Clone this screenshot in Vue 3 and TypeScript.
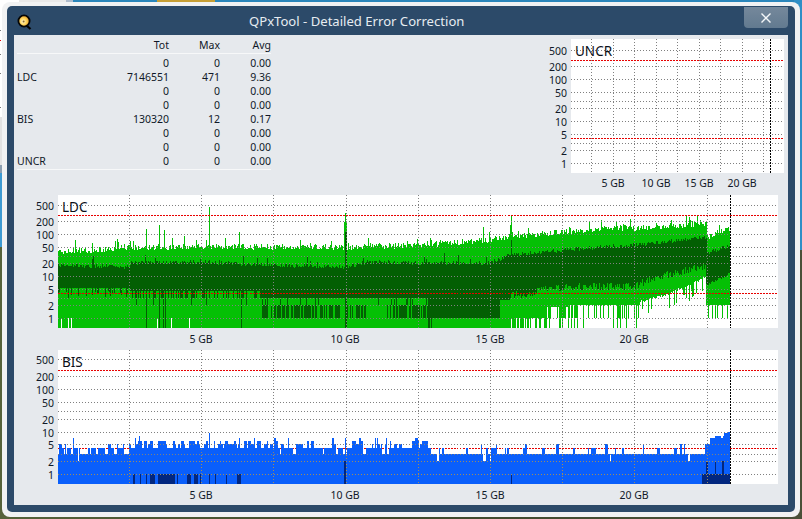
<script setup lang="ts">
type Pt = [number, number]

function mulberry(seed: number) {
  return () => {
    seed |= 0
    seed = (seed + 0x6d2b79f5) | 0
    let t = Math.imul(seed ^ (seed >>> 15), 1 | seed)
    t = (t + Math.imul(t ^ (t >>> 7), 61 | t)) ^ t
    return ((t ^ (t >>> 14)) >>> 0) / 4294967296
  }
}

function lerp(pts: Pt[], x: number): number {
  if (x <= pts[0][0]) return pts[0][1]
  for (let i = 1; i < pts.length; i++) {
    if (x <= pts[i][0]) {
      const [a, b] = pts[i - 1]
      const [c, d] = pts[i]
      return b + ((d - b) * (x - a)) / (c - a)
    }
  }
  return pts[pts.length - 1][1]
}

const seg = (x: number, a: number, b: number) =>
  b > a ? `M${x + 0.5} ${Math.round(a)}V${Math.round(b)}` : ''

/* ---------- LDC ---------- */
function buildLdc() {
  const r = mulberry(4711)
  const T: Pt[] = [[58, 252], [129, 248], [201, 246], [273, 247], [345, 247], [418, 245], [490, 240], [510, 237], [562, 232], [600, 228], [634, 228], [680, 225], [706, 223]]
  const D: Pt[] = [[58, 265], [129, 267], [130, 263], [201, 262], [273, 265], [345, 267], [368, 262], [418, 263], [490, 263], [510, 255], [562, 250], [600, 247], [634, 245], [680, 240], [705, 237]]
  const spikes: Record<number, number> = { 117: 239, 146: 229, 159: 225, 164: 230, 209: 207, 239: 232, 344: 222, 345: 213, 346: 222, 483: 227, 510: 225, 511: 216, 75: 240, 92: 243, 184: 236, 133: 241, 172: 238, 196: 240, 225: 238, 300: 240, 368: 238, 440: 240 }
  const whites = new Set([61, 68, 71, 157, 171, 189])
  const streaks = new Set([146, 159, 163, 165, 241, 345, 346])
  let bright = ''
  let dark = ''
  for (let x = 58; x < 730; x++) {
    const after = x >= 707
    let top = after ? lerp([[707, 237], [730, 228]], x) : lerp(T, x)
    top += r() * 6 - 3
    if (r() < 0.1) top -= r() * 8
    if (spikes[x]) top = spikes[x]
    let dtop = after ? lerp([[707, 253], [730, 245]], x) : lerp(D, x)
    dtop += r() * 4 - 2
    if (x < 510 && r() < 0.07) dtop -= r() * 10
    if (x === 345 || x === 346) dtop = 232
    if (x === 511) dtop = 240

    let dbot: number
    let low = false
    const q = r()
    if (x < 130) dbot = q < 0.3 ? 291 + r() * 7 : 288
    else if (x < 260) dbot = q < 0.05 ? 305 : q < 0.35 ? 298 : 291
    else if (x < 367) { dbot = q < 0.1 ? 305 : 298; low = r() < 0.62 }
    else if (x < 390) { dbot = q < 0.08 ? 305 : 298; low = r() < 0.04 }
    else if (x < 428) { dbot = q < 0.3 ? 305 : 298; low = r() < 0.75 }
    else if (x < 500) dbot = x < 441 && q < 0.35 ? 328 : 318
    else if (x < 510) dbot = 300
    else if (x < 706) dbot = lerp([[510, 292], [562, 283], [634, 282], [660, 272], [705, 262]], x) + r() * 8
    else dbot = lerp([[707, 283], [730, 272]], x) + r() * 3
    if (streaks.has(x)) dbot = 328

    let lbot = 328
    const s = r()
    if (whites.has(x)) lbot = 318
    else if (x >= 510 && x < 543) lbot = s < 0.5 ? 318 : 328
    else if (x >= 543 && x < 570) lbot = s < 0.5 ? 307 : s < 0.75 ? 318 : 328
    else if (x >= 570 && x < 640) lbot = s < 0.08 ? 328 : s < 0.3 ? 318 : 305
    else if (x >= 640 && x < 706) lbot = lerp([[640, 300], [667, 293], [705, 276]], x) + (s < 0.2 ? 8 + r() * 12 : r() * 3)
    else if (x >= 706) lbot = s < 0.2 ? 328 : s < 0.4 ? 318 : 305

    bright += seg(x, top, lbot)
    dark += seg(x, dtop, dbot)
    if (low) dark += seg(x, 305, 318)
  }
  return [
    { d: bright, color: '#05c005' },
    { d: dark, color: '#035f03' },
  ]
}

/* ---------- BIS ---------- */
function buildBis() {
  const r = mulberry(99)
  const y = (v: number) => 474 - 42.5 * Math.log10(v)
  const spikes: Record<number, number> = { 73: 7, 78: 2, 139: 8, 209: 9, 288: 7, 345: 7, 375: 7, 386: 7 }
  const navyRanges: Pt[] = [[133, 134], [140, 140], [146, 146], [150, 153], [154, 154], [158, 174], [177, 177], [187, 190], [194, 197], [200, 200], [209, 209], [215, 215], [226, 226], [237, 240], [511, 511], [702, 729]]
  let blue = ''
  let navy = ''
  for (let x = 58; x < 730; ) {
    const w = r() < 0.4 ? 1 : r() < 0.6 ? 2 : 3
    const q = r()
    let v: number
    if (x < 130) v = q < 0.1 ? 5 : q < 0.5 ? 4 : 3
    else if (x < 268) v = q < 0.05 ? 7 : q < 0.4 ? 6 : q < 0.7 ? 5 : 4
    else if (x < 430) v = q < 0.05 ? 7 : q < 0.15 ? 6 : q < 0.36 ? 5 : q < 0.44 ? 3 : 4
    else if (x < 705) v = q < 0.04 ? 5 : q < 0.2 ? 4 : q < 0.25 ? 2 : 3
    else v = Math.round(lerp([[705, 5], [712, 7], [722, 8], [730, 11]], x) + r() * 1.6 - 0.8)
    for (let i = 0; i < w && x < 730; i++, x++) {
      blue += seg(x, y(spikes[x] ?? v), 484)
    }
  }
  for (const [a, b] of navyRanges) {
    for (let x = a; x <= b; x++) navy += seg(x, 474, 484)
  }
  for (const x of [344, 345]) navy += seg(x, 461, 484)
  for (const x of [706, 707, 715, 722, 723]) navy += seg(x, 461, 474)
  return [
    { d: blue, color: '#0a5ffb' },
    { d: navy, color: '#02277f' },
  ]
}

interface Chart {
  name: string
  svgX: number
  svgY: number
  svgW: number
  svgH: number
  left: number
  right: number
  top: number
  bottom: number
  one: number
  dec: number
  verticals: number[]
  black: number
  xLabels: { t: string; x: number }[]
  xLabelY: number
  titleX: number
  series: { d: string; color: string }[]
  tinted: boolean
}

const ticks = [1, 2, 3, 5, 10, 20, 30, 50, 100, 200, 500]
const yLabels = [1, 2, 5, 10, 20, 50, 100, 200, 500]

const wide = (base: number): number[] => Array.from({ length: 9 }, (_, i) => base + i * 72.2)

const charts: Chart[] = [
  {
    name: 'LDC', svgX: 14, svgY: 190, svgW: 774, svgH: 155,
    left: 58, right: 778, top: 195, bottom: 328, one: 318, dec: 42,
    verticals: wide(129), black: 730,
    xLabels: [{ t: '5 GB', x: 201 }, { t: '10 GB', x: 345 }, { t: '15 GB', x: 490 }, { t: '20 GB', x: 634 }],
    xLabelY: 343, titleX: 62, series: buildLdc(), tinted: false,
  },
  {
    name: 'BIS', svgX: 14, svgY: 345, svgW: 774, svgH: 160,
    left: 58, right: 778, top: 350, bottom: 484, one: 474, dec: 42.5,
    verticals: wide(129), black: 730,
    xLabels: [{ t: '5 GB', x: 201 }, { t: '10 GB', x: 345 }, { t: '15 GB', x: 490 }, { t: '20 GB', x: 634 }],
    xLabelY: 499, titleX: 62, series: buildBis(), tinted: true,
  },
]

const uncr: Chart = {
  name: 'UNCR', svgX: 548, svgY: 35, svgW: 240, svgH: 155,
  left: 571, right: 784, top: 39, bottom: 173, one: 163, dec: 42,
  verticals: [591, 613, 634, 656, 677, 699, 720, 742, 763], black: 770,
  xLabels: [{ t: '5 GB', x: 613 }, { t: '10 GB', x: 656 }, { t: '15 GB', x: 699 }, { t: '20 GB', x: 742 }],
  xLabelY: 187, titleX: 575, series: [], tinted: false,
}

const py = (c: Chart, v: number) => Math.round(c.one - c.dec * Math.log10(v)) + 0.5
const hPath = (c: Chart, x2: number, minY = 0) =>
  ticks.map((v) => py(c, v)).filter((y) => y >= minY).map((y) => `M${c.left} ${y}H${x2}`).join('')
const vPath = (c: Chart, minY?: number) =>
  c.verticals.map((x) => `M${Math.round(x) + 0.5} ${minY ?? c.top}V${c.bottom}`).join('')
const redPath = (c: Chart) =>
  [280, 4].map((v) => `M${c.left} ${py(c, v)}H${c.right}`).join('')
const blackPath = (c: Chart) => `M${c.black + 0.5} ${c.top}V${c.bottom}`

const rows = [
  { l: '', t: '0', m: '0', a: '0.00' },
  { l: 'LDC', t: '7146551', m: '471', a: '9.36' },
  { l: '', t: '0', m: '0', a: '0.00' },
  { l: '', t: '0', m: '0', a: '0.00' },
  { l: 'BIS', t: '130320', m: '12', a: '0.17' },
  { l: '', t: '0', m: '0', a: '0.00' },
  { l: '', t: '0', m: '0', a: '0.00' },
  { l: 'UNCR', t: '0', m: '0', a: '0.00' },
]
</script>

<template>
  <div class="desktop">
    <div class="bg bg-top-white"></div>
    <div class="bg bg-top-gray"></div>
    <div class="bg bg-top-steel"></div>
    <div class="bg bg-top-sky"></div>
    <div class="bg bg-top-gold"></div>
    <div class="bg bg-left-white"></div>
    <div class="bg bg-left-gray"></div>
    <div class="bg bg-left-steel"></div>
    <div class="bg bg-left-blue"></div>
    <div class="bg bg-right-sky"></div>
    <svg class="bg bg-dots" width="8" height="120" viewBox="0 0 8 120">
      <path d="M0 30.5H8M0 54.5H8M0 73.5H8M0 107.5H8" stroke="#777" stroke-dasharray="1 2" fill="none" />
      <path d="M0 40.5H8" stroke="#e00000" stroke-dasharray="1 1" fill="none" />
    </svg>

    <div class="frame">
      <div class="window">
        <header class="titlebar">
          <svg class="app-icon" width="15" height="16" viewBox="0 0 15 16">
            <defs>
              <radialGradient id="disc" cx="0.42" cy="0.55" r="0.6">
                <stop offset="0" stop-color="#fff6d0" />
                <stop offset="0.45" stop-color="#ffd860" />
                <stop offset="1" stop-color="#e89a20" />
              </radialGradient>
            </defs>
            <path d="M9.5 11.5L13.5 15" stroke="#000" stroke-width="2.2" fill="none" />
            <circle cx="7" cy="7" r="5.6" fill="url(#disc)" stroke="#050505" stroke-width="1.8" />
            <circle cx="6.6" cy="7.6" r="1" fill="#8a6a30" />
          </svg>
          <span class="title">QPxTool - Detailed Error Correction</span>
          <button class="close" type="button" aria-label="Close">
            <svg width="12" height="12" viewBox="0 0 12 12">
              <path d="M1.5 1.5L10.5 10.5M10.5 1.5L1.5 10.5" stroke="#f4f7f9" stroke-width="1.4" fill="none" />
            </svg>
          </button>
        </header>

        <main class="panel">
          <section class="top">
            <div class="stats">
              <div class="row head">
                <span></span><span>Tot</span><span>Max</span><span>Avg</span>
              </div>
              <div class="rows">
                <div v-for="(r, i) in rows" :key="i" class="row">
                  <span class="lbl">{{ r.l }}</span><span>{{ r.t }}</span><span>{{ r.m }}</span><span>{{ r.a }}</span>
                </div>
              </div>
            </div>
            <svg class="chart" :width="uncr.svgW" :height="uncr.svgH"
              :viewBox="`${uncr.svgX} ${uncr.svgY} ${uncr.svgW} ${uncr.svgH}`">
              <rect :x="uncr.left" :y="uncr.top" :width="uncr.right - uncr.left" :height="uncr.bottom - uncr.top" fill="#fff" />
              <path :d="hPath(uncr, uncr.right)" class="grid" />
              <path :d="vPath(uncr)" class="grid" />
              <path :d="redPath(uncr)" class="red" />
              <path :d="blackPath(uncr)" class="black" />
              <text v-for="v in yLabels" :key="v" :x="uncr.left - 4" :y="py(uncr, v) + 4" text-anchor="end" class="axis">{{ v }}</text>
              <text v-for="l in uncr.xLabels" :key="l.t" :x="l.x" :y="uncr.xLabelY" text-anchor="middle" class="axis">{{ l.t }}</text>
              <text :x="uncr.titleX" :y="uncr.top + 17" class="name">{{ uncr.name }}</text>
            </svg>
          </section>

          <svg v-for="c in charts" :key="c.name" class="chart" :width="c.svgW" :height="c.svgH"
            :viewBox="`${c.svgX} ${c.svgY} ${c.svgW} ${c.svgH}`">
            <rect :x="c.left" :y="c.top" :width="c.right - c.left" :height="c.bottom - c.top" fill="#fff" />
            <path v-if="c.tinted" :d="redPath(c)" class="red" />
            <path v-for="s in c.series" :key="s.color" :d="s.d" :stroke="s.color" class="bars" />
            <path :d="hPath(c, c.right)" class="grid" />
            <path :d="vPath(c)" class="grid" />
            <template v-if="c.tinted">
              <path :d="hPath(c, 730, 455)" class="grid tint" />
              <path :d="vPath(c, 455)" class="grid tint" />
            </template>
            <path v-else :d="redPath(c)" class="red" />
            <path :d="blackPath(c)" class="black" />
            <text v-for="v in yLabels" :key="v" :x="c.left - 4" :y="py(c, v) + 4" text-anchor="end" class="axis">{{ v }}</text>
            <text v-for="l in c.xLabels" :key="l.t" :x="l.x" :y="c.xLabelY" text-anchor="middle" class="axis">{{ l.t }}</text>
            <text :x="c.titleX" :y="c.top + 17" class="name">{{ c.name }}</text>
          </svg>
        </main>
      </div>
    </div>
  </div>
</template>

<style scoped>
.desktop {
  position: relative;
  width: 802px;
  height: 519px;
  box-sizing: border-box;
  padding: 2px;
  overflow: hidden;
  background: linear-gradient(90deg, #56623a, #3f4a2c 50%, #4a4f38);
  font-family: "Noto Sans", "Liberation Sans", sans-serif;
}
.bg { position: absolute; display: block; }
.bg-top-white { left: 0; top: 0; width: 19px; height: 8px; background: #fff; }
.bg-top-gray { left: 19px; top: 0; width: 47px; height: 6px; background: #e9e9e9; }
.bg-top-steel { left: 66px; top: 0; width: 7px; height: 6px; background: #aebccd; }
.bg-top-sky { left: 73px; top: 0; width: 729px; height: 6px; background: #2b86bb; }
.bg-top-gold { left: 157px; top: 0; width: 58px; height: 2px; background: #c79f35; }
.bg-left-white { left: 0; top: 8px; width: 8px; height: 109px; background: #fff; }
.bg-left-gray { left: 0; top: 117px; width: 8px; height: 48px; background: #e2e2e2; }
.bg-left-steel { left: 0; top: 165px; width: 8px; height: 8px; background: #8c9eb0; }
.bg-left-blue { left: 0; top: 173px; width: 8px; height: 74px; background: #3d9ad2; }
.bg-right-sky { right: 0; top: 0; width: 8px; height: 250px; background: #2f8fc6; }
.bg-dots { left: 0; top: 0; }

.frame {
  position: relative;
  box-sizing: border-box;
  width: 798px;
  height: 515px;
  padding: 4px 5px 5px;
  border-radius: 8px;
  background: #f1f2f3;
}
.window {
  display: flex;
  flex-direction: column;
  height: 100%;
  border-radius: 5px;
  background: #2c4a69;
}
.titlebar {
  display: flex;
  align-items: flex-start;
  height: 29px;
  flex: none;
}
.app-icon { margin: 8px 0 0 10px; flex: none; }
.title {
  margin: 6px 0 0 217px;
  font-size: 13.1px;
  line-height: 18px;
  color: #e6ecf1;
  white-space: nowrap;
}
.close {
  display: flex;
  align-items: center;
  justify-content: center;
  margin: 1px 7px 0 auto;
  width: 44px;
  height: 21px;
  padding: 0;
  border: 0;
  border-radius: 0 0 4px 4px;
  background: linear-gradient(#75889b, #627a90);
}
.panel {
  flex: 1;
  margin: 0 7px 7px;
  background: #e6e9ed;
  display: flex;
  flex-direction: column;
}
.top {
  display: flex;
  justify-content: space-between;
  height: 155px;
  flex: none;
}
.chart { display: block; flex: none; }
.stats {
  width: 254px;
  margin: 3px 0 0 3px;
  font-size: 10.5px;
  color: #101828;
}
.row {
  display: grid;
  grid-template-columns: 60px 92px 51px 51px;
  height: 14px;
  line-height: 14px;
  text-align: right;
}
.row .lbl { text-align: left; }
.head {
  height: 15px;
  border-bottom: 1px solid #f7f8f9;
  box-sizing: content-box;
}
.rows {
  margin-top: 2px;
  padding-bottom: 1px;
  border-bottom: 1px solid #f7f8f9;
}
.bars { fill: none; stroke-width: 1; shape-rendering: crispEdges; }
.grid { fill: none; stroke: #808080; stroke-width: 1; stroke-dasharray: 1 2; shape-rendering: crispEdges; }
.tint { stroke: #a08c5c; }
.red { fill: none; stroke: #e80000; stroke-width: 1; stroke-dasharray: 1.5 1.5; shape-rendering: crispEdges; }
.black { fill: none; stroke: #000; stroke-width: 1; stroke-dasharray: 1.5 1.5; shape-rendering: crispEdges; }
.axis { font-size: 10.5px; fill: #101828; }
.name { font-size: 13.5px; fill: #0a0f18; }
</style>
